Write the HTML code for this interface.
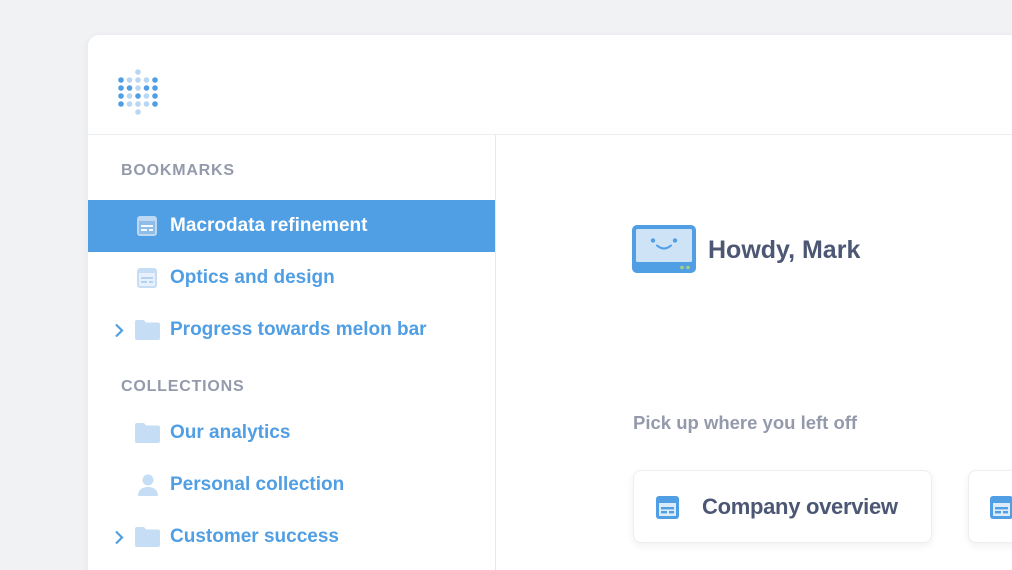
<!DOCTYPE html>
<html style="width:1012px;height:570px;overflow:hidden"><head><meta charset="utf-8"><style>
*{margin:0;padding:0;box-sizing:border-box}
body{width:1012px;height:570px;overflow:hidden;background:#f1f2f4;font-family:"Liberation Sans",sans-serif;position:relative}
.card{position:absolute;left:87px;top:34px;width:925px;height:536px;background:#fff;border-radius:12px 0 0 0;box-shadow:0 2px 8px rgba(0,0,0,.05);border:1px solid #ebedf0;border-right:none;border-bottom:none;overflow:hidden}
.hdr{position:absolute;left:0;top:0;right:0;height:100px;border-bottom:1px solid #eaecef}
.side{position:absolute;left:0;top:100px;width:408px;height:436px;border-right:1px solid #e6e8eb}
.sec{position:absolute;left:33px;font-size:16px;letter-spacing:.8px;color:#949aab;font-weight:bold}
.item{position:absolute;left:0;width:407px;height:52px;font-size:19px;font-weight:bold;color:#509ee3;line-height:52px}
.item .t{position:absolute;left:82px;letter-spacing:0}
.item svg{position:absolute}
.sel{background:#509ee3;color:#fff}
.h{position:absolute;top:236px;font-size:25px;font-weight:bold;color:#4c5773;letter-spacing:0}
.p{position:absolute;left:633px;top:412px;font-size:18.5px;font-weight:bold;color:#949aab;letter-spacing:0}
.c{position:absolute;top:470px;height:73px;background:#fff;border:1px solid #eceef1;border-radius:8px;box-shadow:0 3px 8px rgba(0,0,0,.06)}
</style></head><body>
<div class="card">
<div class="hdr">
<svg style="position:absolute;left:29px;top:31px" width="44" height="50" viewBox="0 0 44 50">
<g fill="#509ee3">
<circle cx="4" cy="14" r="2.8"/><circle cx="38" cy="14" r="2.8"/>
<circle cx="4" cy="22" r="2.8"/><circle cx="12.5" cy="22" r="2.8"/><circle cx="29.5" cy="22" r="2.8"/><circle cx="38" cy="22" r="2.8"/>
<circle cx="4" cy="30" r="2.8"/><circle cx="21" cy="30" r="2.8"/><circle cx="38" cy="30" r="2.8"/>
<circle cx="4" cy="38" r="2.8"/><circle cx="38" cy="38" r="2.8"/>
</g>
<g fill="#b9d7f2">
<circle cx="21" cy="6" r="2.8"/><circle cx="21" cy="46" r="2.8"/>
<circle cx="12.5" cy="14" r="2.8"/><circle cx="21" cy="14" r="2.8"/><circle cx="29.5" cy="14" r="2.8"/>
<circle cx="21" cy="22" r="2.8"/>
<circle cx="12.5" cy="30" r="2.8"/><circle cx="29.5" cy="30" r="2.8"/>
<circle cx="12.5" cy="38" r="2.8"/><circle cx="21" cy="38" r="2.8"/><circle cx="29.5" cy="38" r="2.8"/>
</g></svg>
</div>
<div class="side">
<div class="sec" style="top:27px">BOOKMARKS</div>
<div class="item sel" style="top:65px"><svg style="left:48px;top:15px" width="22" height="22" viewBox="0 0 22 22"><rect x="1" y="1" width="20" height="20" rx="3" fill="#bcd8f3"/><rect x="3" y="6" width="16" height="13" fill="#8ebde9"/><rect x="5" y="10" width="12" height="2" fill="#fff" opacity=".9"/><rect x="5" y="14" width="6" height="2" fill="#fff" opacity=".9"/><rect x="13" y="14" width="4" height="2" fill="#fff" opacity=".9"/></svg><span class="t">Macrodata refinement</span></div>
<div class="item" style="top:117px"><svg style="left:48px;top:15px" width="22" height="22" viewBox="0 0 22 22"><rect x="1" y="1" width="20" height="20" rx="3" fill="#c6def5"/><rect x="3" y="6" width="16" height="13" fill="#e8f1fb"/><rect x="5" y="10" width="12" height="2" fill="#b5d3f0"/><rect x="5" y="14" width="6" height="2" fill="#b5d3f0"/><rect x="13" y="14" width="4" height="2" fill="#b5d3f0"/></svg><span class="t">Optics and design</span></div>
<div class="item" style="top:169px"><svg style="left:26px;top:19px" width="10" height="15" viewBox="0 0 10 15"><path d="M2 1.5l6 6-6 6" fill="none" stroke="#509ee3" stroke-width="2.2"/></svg><svg style="left:47px;top:16px" width="25" height="20" viewBox="0 0 25 20"><path d="M0 2a2 2 0 0 1 2-2h7l2 2.5h12a2 2 0 0 1 2 2V18a2 2 0 0 1-2 2H2a2 2 0 0 1-2-2z" fill="#c6def5"/></svg><span class="t">Progress towards melon bar</span></div>
<div class="sec" style="top:243px">COLLECTIONS</div>
<div class="item" style="top:272px"><svg style="left:47px;top:16px" width="25" height="20" viewBox="0 0 25 20"><path d="M0 2a2 2 0 0 1 2-2h7l2 2.5h12a2 2 0 0 1 2 2V18a2 2 0 0 1-2 2H2a2 2 0 0 1-2-2z" fill="#c6def5"/></svg><span class="t">Our analytics</span></div>
<div class="item" style="top:324px"><svg style="left:49px;top:14px" width="22" height="24" viewBox="0 0 22 24"><circle cx="11" cy="7" r="5.5" fill="#c6def5"/><path d="M1 23c0-6 4-9 10-9s10 3 10 9z" fill="#c6def5"/></svg><span class="t">Personal collection</span></div>
<div class="item" style="top:376px"><svg style="left:26px;top:19px" width="10" height="15" viewBox="0 0 10 15"><path d="M2 1.5l6 6-6 6" fill="none" stroke="#509ee3" stroke-width="2.2"/></svg><svg style="left:47px;top:16px" width="25" height="20" viewBox="0 0 25 20"><path d="M0 2a2 2 0 0 1 2-2h7l2 2.5h12a2 2 0 0 1 2 2V18a2 2 0 0 1-2 2H2a2 2 0 0 1-2-2z" fill="#c6def5"/></svg><span class="t">Customer success</span></div>
</div>
</div>
<svg style="position:absolute;left:632px;top:225px" width="64" height="48" viewBox="0 0 64 48"><rect x="0" y="0" width="64" height="48" rx="5" fill="#509ee3"/><rect x="4" y="4" width="56" height="33" rx="1.5" fill="#cfe3f7"/><circle cx="21" cy="15.5" r="2.2" fill="#509ee3"/><circle cx="43" cy="15.5" r="2.2" fill="#509ee3"/><path d="M25 20.5q7 6 14 0" fill="none" stroke="#509ee3" stroke-width="2" stroke-linecap="round"/><circle cx="50" cy="42.5" r="1.8" fill="#a7d07c"/><circle cx="56" cy="42.5" r="1.8" fill="#a7d07c"/></svg>
<div class="h" style="left:708px">Howdy, Mark</div>
<div class="p">Pick up where you left off</div>
<div class="c" style="left:633px;width:299px"><svg style="position:absolute;left:22px;top:25px" width="23" height="23" viewBox="0 0 23 23"><rect x="0" y="0" width="23" height="23" rx="3" fill="#509ee3"/><rect x="3" y="7" width="17" height="13" fill="#dcebfa"/><rect x="5" y="11" width="13" height="2.4" fill="#509ee3"/><rect x="5" y="15" width="6" height="2.4" fill="#509ee3"/><rect x="13" y="15" width="5" height="2.4" fill="#509ee3"/></svg><span style="position:absolute;left:68px;top:23px;font-size:22px;font-weight:bold;color:#4c5773;letter-spacing:-.3px">Company overview</span></div>
<div class="c" style="left:968px;width:100px;border-right:none;border-radius:8px 0 0 8px"><svg style="position:absolute;left:21px;top:25px" width="23" height="23" viewBox="0 0 23 23"><rect x="0" y="0" width="23" height="23" rx="3" fill="#509ee3"/><rect x="3" y="7" width="17" height="13" fill="#dcebfa"/><rect x="5" y="11" width="13" height="2.4" fill="#509ee3"/><rect x="5" y="15" width="6" height="2.4" fill="#509ee3"/><rect x="13" y="15" width="5" height="2.4" fill="#509ee3"/></svg></div>
</body></html>
